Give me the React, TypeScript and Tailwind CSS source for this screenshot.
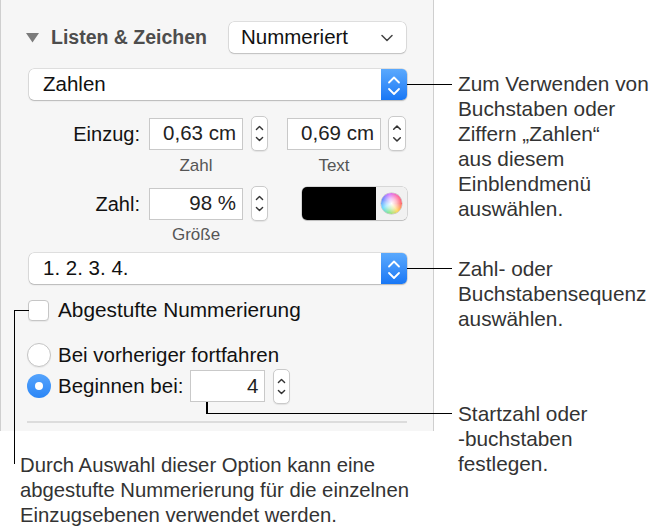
import React from "react"

const ui = "font-['Liberation_Sans',Arial,sans-serif]"

function Stepper({ className = "" }: { className?: string }) {
  return (
    <div className={`h-[35px] w-[17px] shrink-0 rounded-[5px] border border-[#cacaca] bg-white shadow-[0_1px_1px_rgba(0,0,0,0.08)] ${className}`}>
      <svg width="100%" height="100%" viewBox="0 0 17 35" fill="none" stroke="#333" strokeWidth="1.6" strokeLinecap="round" strokeLinejoin="round">
        <path d="M5 13 L8.5 9.5 L12 13" />
        <path d="M5 22 L8.5 25.5 L12 22" />
      </svg>
    </div>
  )
}

function PopUp({ label }: { label: string }) {
  return (
    <div className="flex h-[31px] items-stretch rounded-[5px] bg-white shadow-[0_0_0_0.5px_rgba(0,0,0,0.18),0_1px_1.5px_rgba(0,0,0,0.18)]">
      <div className="flex flex-1 items-center pl-[14px] text-[20.5px] text-[#111]">{label}</div>
      <div className="w-[26px] rounded-r-[5px] bg-gradient-to-b from-[#5aa9fd] to-[#1777f5]">
        <svg width="26" height="31" viewBox="0 0 26 31" fill="none" stroke="#fff" strokeWidth="1.8" strokeLinecap="round" strokeLinejoin="round">
          <path d="M8 13.5 L13 8.5 L18 13.5" />
          <path d="M8 20 L13 25 L18 20" />
        </svg>
      </div>
    </div>
  )
}

function Field({ value, className = "" }: { value: string; className?: string }) {
  return (
    <div className={`flex h-[32px] shrink-0 items-center justify-end border border-[#c9c9c9] bg-white pr-[6px] text-[20.5px] text-[#222] ${className}`}>
      {value}
    </div>
  )
}

export default function App() {
  return (
    <div className={`relative flex h-[530px] w-[664px] overflow-hidden bg-white ${ui}`}>
      {/* left: panel + bottom note */}
      <div className="flex w-[434px] shrink-0 flex-col">
        <div className="border-x border-[#cfcfcf] bg-[#f6f6f6] pb-[8px] pl-[28px] pr-[26px] pt-[22px]">
          {/* header */}
          <div className="flex h-[31px] items-center">
            <svg className="-ml-[3px]" width="13" height="10" viewBox="0 0 13 10">
              <path d="M0 0 H13 L6.5 9.5 Z" fill="#7b7b7b" />
            </svg>
            <span className="ml-[12px] text-[19.5px] font-bold text-[#4d4d4d]">Listen &amp; Zeichen</span>
            <div className="ml-auto mr-[1px] flex h-[31px] w-[177px] items-center justify-between rounded-[5px] bg-white pl-[12px] pr-[13px] text-[20.5px] text-[#111] shadow-[0_0_0_0.5px_rgba(0,0,0,0.18),0_1px_1.5px_rgba(0,0,0,0.15)]">
              <span>Nummeriert</span>
              <svg width="12" height="8" viewBox="0 0 12 8" fill="none" stroke="#444" strokeWidth="1.5" strokeLinecap="round" strokeLinejoin="round">
                <path d="M1 1.5 L6 6.5 L11 1.5" />
              </svg>
            </div>
          </div>

          <div className="mt-[16px]">
            <PopUp label="Zahlen" />
          </div>

          {/* Einzug */}
          <div className="mt-[16px] flex h-[35px] items-center">
            <span className="w-[111px] text-right text-[20px] text-[#111]">Einzug:</span>
            <Field value="0,63 cm" className="ml-[9px] w-[94px]" />
            <Stepper className="ml-[8px]" />
            <Field value="0,69 cm" className="ml-[19px] w-[94px]" />
            <Stepper className="ml-[7px] w-[18px]" />
          </div>
          <div className="mt-[5px] flex h-[20px] items-center text-[17px] text-[#555]">
            <span className="ml-[120px] w-[94px] text-center">Zahl</span>
            <span className="ml-[44px] w-[94px] text-center">Text</span>
          </div>

          {/* Zahl size */}
          <div className="mt-[10px] flex h-[35px] items-center">
            <span className="w-[111px] text-right text-[20px] text-[#111]">Zahl:</span>
            <Field value="98 %" className="ml-[9px] w-[94px]" />
            <Stepper className="ml-[8px]" />
            <div className="ml-[34px] flex h-[33px] w-[105px] overflow-hidden rounded-[5px] shadow-[0_0_0_0.5px_rgba(0,0,0,0.25),0_1px_1px_rgba(0,0,0,0.12)]">
              <div className="w-[74px] bg-black" />
              <div className="flex flex-1 items-center justify-center bg-[#f1f1f1]">
                <div className="relative h-[21px] w-[21px] rounded-full bg-[conic-gradient(from_90deg,#ff5a5a,#ffd24a,#7be37b,#5fd8ff,#5b7cff,#d16bff,#ff5a9a,#ff5a5a)] shadow-[0_0_0_0.5px_rgba(0,0,0,0.2)]">
                  <div className="absolute inset-0 rounded-full bg-[radial-gradient(circle,rgba(255,255,255,1)_0%,rgba(255,255,255,0.6)_35%,rgba(255,255,255,0)_72%)]" />
                </div>
              </div>
            </div>
          </div>
          <div className="mt-[4px] flex h-[20px] items-center text-[17px] text-[#555]">
            <span className="ml-[120px] w-[94px] text-center">Größe</span>
          </div>

          <div className="mt-[8px]">
            <PopUp label="1. 2. 3. 4." />
          </div>

          {/* checkbox */}
          <div className="mt-[15px] flex h-[22px] items-center">
            <div className="-ml-[1px] h-[21px] w-[21px] rounded-[4px] border border-[#c6c6c6] bg-white shadow-[0_1px_1px_rgba(0,0,0,0.06)]" />
            <span className="ml-[9px] text-[20.8px] text-[#111]">Abgestufte Nummerierung</span>
          </div>

          {/* radios */}
          <div className="mt-[22px] flex h-[24px] items-center">
            <div className="-ml-[2px] h-[24px] w-[24px] rounded-full border border-[#c4c4c4] bg-white shadow-[0_1px_1px_rgba(0,0,0,0.06)]" />
            <span className="ml-[7px] text-[20.5px] text-[#111]">Bei vorheriger fortfahren</span>
          </div>
          <div className="mt-[3px] flex h-[32px] items-center">
            <div className="-ml-[2px] flex h-[24px] w-[24px] items-center justify-center rounded-full bg-gradient-to-b from-[#54a3fc] to-[#2a86f6]">
              <div className="h-[8px] w-[8px] rounded-full bg-white" />
            </div>
            <span className="ml-[7px] text-[20.5px] text-[#111]">Beginnen bei:</span>
            <Field value="4" className="ml-[7px] w-[75px]" />
            <Stepper className="ml-[8px] h-[31px]" />
          </div>

          <div className="-ml-[2px] mt-[19px] h-[1.5px] bg-[#dcdcdc]" />
        </div>

        <p className="ml-[20px] mt-[22px] text-[20.3px] leading-[25px] text-[#333]">
          Durch Auswahl dieser Option kann eine
          <br />
          abgestufte Nummerierung für die einzelnen
          <br />
          Einzugsebenen verwendet werden.
        </p>
      </div>

      {/* right: callouts */}
      <div className="ml-[24px] flex flex-col text-[20.8px] leading-[25px] text-[#333]">
        <p className="mt-[71px]">
          Zum Verwenden von
          <br />
          Buchstaben oder
          <br />
          Ziffern „Zahlen“
          <br />
          aus diesem
          <br />
          Einblendmenü
          <br />
          auswählen.
        </p>
        <p className="mt-[35px]">
          Zahl- oder
          <br />
          Buchstabensequenz
          <br />
          auswählen.
        </p>
        <p className="mt-[70px]">
          Startzahl oder
          <br />
          -buchstaben
          <br />
          festlegen.
        </p>
      </div>

      {/* leader lines */}
      <div className="absolute left-[407px] top-[83.5px] h-[1.5px] w-[45px] bg-black" />
      <div className="absolute left-[407px] top-[267.5px] h-[1.5px] w-[45px] bg-black" />
      <div className="absolute left-[206px] top-[402px] h-[12px] w-[1.5px] bg-black" />
      <div className="absolute left-[206px] top-[412.5px] h-[1.5px] w-[246px] bg-black" />
      <div className="absolute left-[13.5px] top-[309.5px] h-[1.5px] w-[15px] bg-black" />
      <div className="absolute left-[13.5px] top-[309.5px] h-[154px] w-[1.5px] bg-black" />
    </div>
  )
}
